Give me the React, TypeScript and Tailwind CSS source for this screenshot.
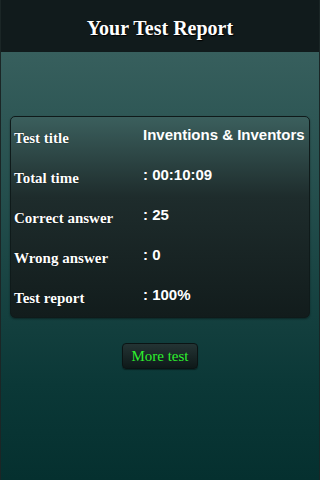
import React from "react"

const rows = [
  { label: "Test title", value: "Inventions & Inventors" },
  { label: "Total time", value: ": 00:10:09" },
  { label: "Correct answer", value: ": 25" },
  { label: "Wrong answer", value: ": 0" },
  { label: "Test report", value: ": 100%" },
]

export default function App() {
  return (
    <div className="flex flex-col w-[320px] h-[480px] border-x border-[#1b2626] bg-[linear-gradient(to_bottom,#3e6563,#0b3837_80%,#05302f)]">
      {/* Header */}
      <div className="h-[52px] shrink-0 flex items-center justify-center pt-[4px] bg-[#111b1c]">
        <h1 className="text-white font-bold text-[20px] font-['Liberation_Serif',serif] [text-shadow:1px_1px_1px_#000]">
          Your Test Report
        </h1>
      </div>

      {/* Report card */}
      <div className="mt-[64px] mx-[9px] rounded-[5px] border border-[#0f1a1a] bg-[linear-gradient(to_bottom,#3b5f5d,#1e2c2c_40%,#121c1c)] shadow-[0_1px_2px_rgba(0,0,0,0.4)]">
        {rows.map(({ label, value }) => (
          <div key={label} className="flex h-[40px] items-center">
            <span className="w-[132px] pl-[3px] pt-[3px] text-white font-bold text-[15px] font-['Liberation_Serif',serif] [text-shadow:0_0_1px_#000]">
              {label}
            </span>
            <span className="text-white font-bold text-[15px] font-['Liberation_Sans',sans-serif] -mt-[3px]">
              {value}
            </span>
          </div>
        ))}
      </div>

      <div className="flex justify-center mt-[25px]">
        <button className="h-[26px] px-[8px] rounded-[4px] border border-[#0b1414] bg-[linear-gradient(to_bottom,#243434,#0e1919)] text-[#2df02d] text-[15px] font-['Liberation_Serif',serif] shadow-[0_1px_1px_rgba(0,0,0,0.4)]">
          More test
        </button>
      </div>
    </div>
  )
}
